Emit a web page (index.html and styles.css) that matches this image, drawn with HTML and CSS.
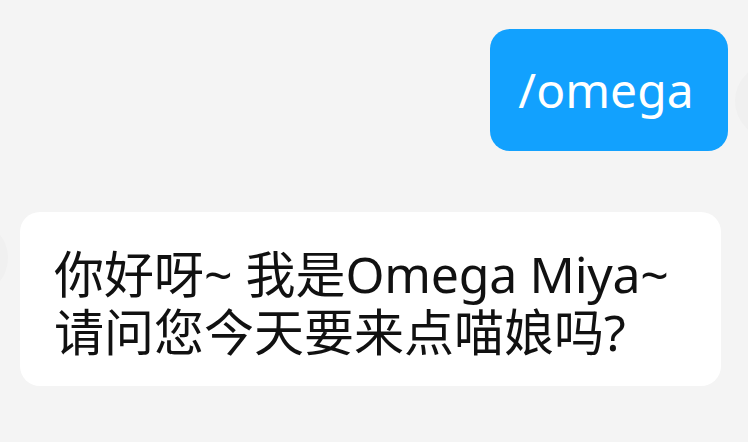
FILE: index.html
```html
<!DOCTYPE html>
<html lang="zh-CN">
<head>
<meta charset="utf-8">
<link rel="stylesheet" href="styles.css">
</head>
<body>
<div class="chat">
  <div class="row row-out">
    <div class="bubble bubble-out">/omega</div>
    <div class="avatar avatar-out"></div>
  </div>
  <div class="row row-in">
    <div class="avatar avatar-in"></div>
    <div class="bubble bubble-in"><div class="line">你好呀~ 我是<span class="lat">Omega Miya~</span></div><div class="line">请问您今天要来点喵娘吗?</div></div>
  </div>
</div>
</body>
</html>
```
FILE: styles.css
```css
html, body {
  margin: 0;
  padding: 0;
  background: #f4f4f4;
  width: 748px;
  height: 442px;
  overflow: hidden;
}
.chat {
  display: flex;
  flex-direction: column;
  padding-top: 29px;
  font-family: "Noto Sans", "Noto Sans CJK SC", sans-serif;
}
.row {
  display: flex;
  align-items: flex-start;
}
.row-out {
  justify-content: flex-end;
}
.row-in {
  margin-top: 61px;
}
.bubble {
  box-sizing: border-box;
  border-radius: 20px;
}
.bubble-out {
  background: #12a1fe;
  color: #ffffff;
  width: 238px;
  height: 122px;
  font-size: 48px;
  line-height: 122px;
  text-align: center;
  padding-bottom: 6px;
  padding-right: 6px;
  margin-right: 7px;
}
.avatar {
  flex: none;
  width: 76px;
  height: 76px;
  border-radius: 50%;
  background: #f0f0f0;
}
.avatar-out {
  margin-right: -63px;
  margin-top: 34px;
}
.avatar-in {
  margin-left: -68px;
  margin-top: 8px;
  margin-right: 12px;
}
.bubble-in {
  background: #ffffff;
  color: #111111;
  width: 701px;
  height: 174px;
  font-size: 50px;
  padding: 33px 0 0 34px;
}
.line {
  height: 58px;
  line-height: 58px;
  white-space: nowrap;
}
.lat {
  letter-spacing: -0.3px;
}
```
